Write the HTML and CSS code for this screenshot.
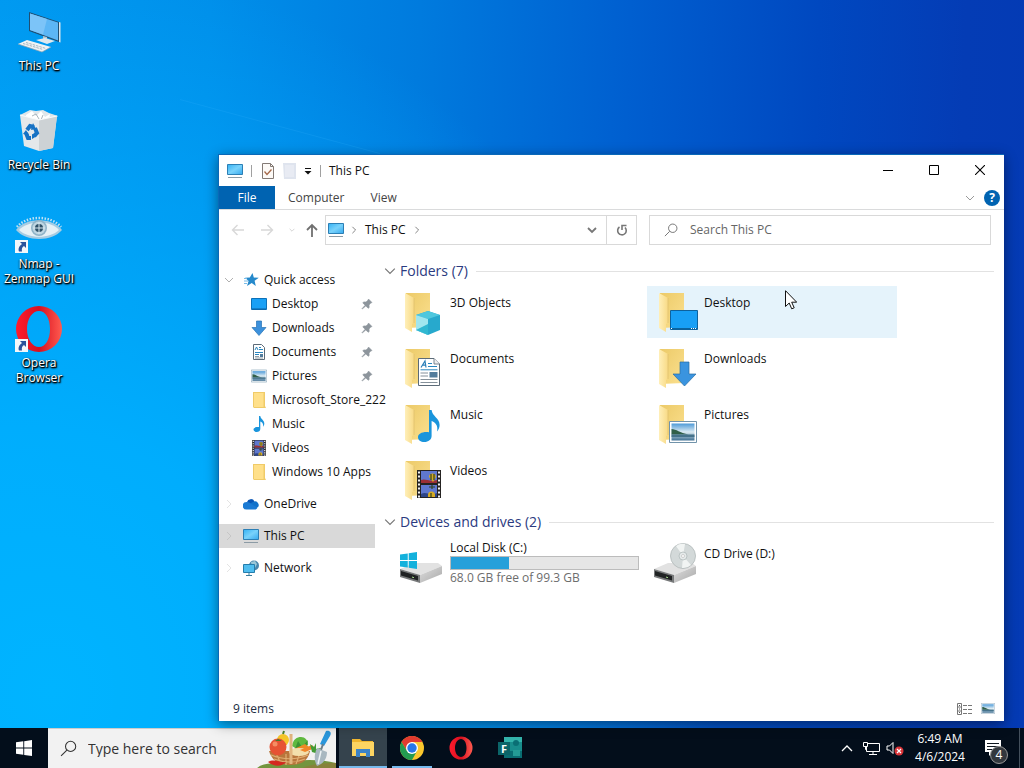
FILE: index.html
```html
<!DOCTYPE html>
<html lang="en">
<head>
  <meta charset="UTF-8">
  <title>This PC</title>
  <link rel="stylesheet" href="styles.css">
</head>
<body>

<!-- shared icons -->
<svg class="defs" width="0" height="0" aria-hidden="true">
  <defs>
    <linearGradient id="g-screen" x1="0" y1="0" x2="1" y2="1">
      <stop offset="0" stop-color="#35b2f4"/><stop offset=".5" stop-color="#79d2fb"/><stop offset="1" stop-color="#35a9ee"/>
    </linearGradient>
    <linearGradient id="g-back" x1="0" y1="0" x2="1" y2="1">
      <stop offset="0" stop-color="#ecca68"/><stop offset="1" stop-color="#fbe08f"/>
    </linearGradient>
    <linearGradient id="g-front" x1="0" y1="0" x2="1" y2="0">
      <stop offset="0" stop-color="#ffefb9"/><stop offset="1" stop-color="#f8da85"/>
    </linearGradient>
    <linearGradient id="g-drive" x1="0" y1="0" x2="1" y2="1">
      <stop offset="0" stop-color="#dedede"/><stop offset="1" stop-color="#a9a9a9"/>
    </linearGradient>
    <linearGradient id="g-opera" x1="0" y1="0" x2="1" y2="0">
      <stop offset="0" stop-color="#ff1b2d"/><stop offset=".5" stop-color="#d9101f"/><stop offset="1" stop-color="#ff5b50"/>
    </linearGradient>
    <linearGradient id="g-photo" x1="0" y1="0" x2="0" y2="1">
      <stop offset="0" stop-color="#4d9ad8"/><stop offset=".5" stop-color="#dcebf2"/><stop offset="1" stop-color="#3e6f92"/>
    </linearGradient>
    <symbol id="i-pc" viewBox="0 0 16 16">
      <path d="M.5 1.500h15v10H.500z" fill="url(#g-screen)" stroke="#2c7fb5"/>
      <path d="M1 14.500h14" stroke="#8c9ba5"/>
    </symbol>
    <symbol id="i-folder" viewBox="0 0 48 48">
      <path d="M7 5h24v34l-24 1z" fill="url(#g-back)"/>
      <path d="M6 5l9 5v25l-2 1v8l-7-4z" fill="url(#g-front)"/>
      <path d="M15 10v25" stroke="#dfc070" stroke-width=".8"/>
    </symbol>
    <symbol id="i-smallfolder" viewBox="0 0 16 16">
      <path d="M2 0h12v14l1 2H3l-1-1z" fill="#f0cb68"/><path d="M3 1h9.500v14H3z" fill="#ffe08a"/>
    </symbol>
    <symbol id="i-down" viewBox="0 0 16 16">
      <path d="M5.500 1h5v6.500H15L8 15.500 1 7.500h4.500z" fill="#3c91dc" stroke="#2672b4" stroke-width=".7"/>
    </symbol>
    <symbol id="i-note" viewBox="0 0 16 16">
      <path d="M8 0h1.300c.2 3 4 4 4 7.500 0 1.500-.6 2.500-1.300 3.300.8-3-1-4.800-2.700-5.300V13c0 1.800-1.600 3-3.600 3C3.800 16 2.500 15 2.500 13.600c0-1.700 2.200-2.900 5.500-2.500z" fill="#1a95dc"/>
    </symbol>
    <symbol id="i-doc" viewBox="0 0 22 28">
      <path d="M.5.500h15.500l5.500 5.500v21.500H.500z" fill="#fff" stroke="#5c6b78"/>
      <path d="M16 .500V6h5.500" fill="#eee" stroke="#5c6b78" stroke-width=".8"/>
      <path d="M3 9.500L7 3l1 6.500M4.500 7.200h3.500" fill="none" stroke="#2a7fb8" stroke-width="1.200"/>
      <path d="M10 5.500h4M10 8.500h9M2.500 11.800h17" stroke="#2b86be"/>
      <path d="M2.500 15h7.500M2.500 18h7.500M2.500 21.500h17M2.500 24.500h17" stroke="#77858f" stroke-width=".9"/>
      <path d="M11.500 14h8v5.500h-8z" fill="#527c9c"/>
    </symbol>
    <symbol id="i-smalldoc" viewBox="0 0 16 16">
      <path d="M2.500.500h8l3 3v12h-11z" fill="#fff" stroke="#5c6b78"/>
      <path d="M4 6l1.500-3L7 6M8 3.500h2M8 5.500h4M4 8.500h8M4 10.500h4" fill="none" stroke="#2b86be"/>
      <path d="M4 12.500h4M4 14h8" stroke="#77858f" stroke-width=".8"/><path d="M9 10h3v3H9z" fill="#527c9c"/>
    </symbol>
    <symbol id="i-photo" viewBox="0 0 28 22">
      <path d="M.5.500h27v21H.500z" fill="#fff" stroke="#7193aa"/>
      <path d="M2.500 2.500h23v17h-23z" fill="url(#g-photo)"/>
      <path d="M2.500 8c5 0 8 4 17 5.500H2.500z" fill="#315f49"/><path d="M2.500 13.500h23V16h-23z" fill="#45728a"/>
    </symbol>
    <symbol id="i-film" viewBox="0 0 24 28">
      <path d="M0 0h24v28H0z" fill="#252322"/>
      <path d="M4 1h16v12H4zM4 15h16v12H4z" fill="#5f78cf"/>
      <path d="M4 10c4-2 8 2 16 0v3H4z" fill="#9b2f35"/><path d="M4 24c5-3 9 2 16-1v4H4z" fill="#2d4586"/>
      <path d="M12 7a3.500 3.500 0 1 1 7 0l-3 5zM11 25a3 3 0 1 1 7 0v2h-7z" fill="#d6ab24"/>
      <path d="M14 4v6M17 4v6M12 17h6M15 15v4M14 23v4" stroke="#31431f" stroke-width="1.200"/>
      <path d="M2 1.500v26M22 1.500v26" stroke="#f2f2f2" stroke-width="2" stroke-dasharray="2 2"/>
    </symbol>
    <symbol id="i-pin" viewBox="0 0 12 12">
      <path d="M7.500 1L11 4.500l-1.200.5L8 7l.2 2.500-1 .8L4.800 7.900 1.300 11 1 10.700l3.100-3.500L1.800 4.900l.8-1L5 4l2-1.800z" fill="#8d959c" stroke="#8d959c" stroke-width=".6"/>
    </symbol>
    <symbol id="i-chev" viewBox="0 0 10 10"><path d="M1 3l4 4 4-4" fill="none" stroke="currentColor"/></symbol>
    <symbol id="i-right" viewBox="0 0 10 10"><path d="M3 1l4 4-4 4" fill="none" stroke="currentColor"/></symbol>
    <symbol id="i-search" viewBox="0 0 16 16"><g fill="none" stroke="currentColor"><circle cx="10" cy="6" r="4.800"/><path d="M6.500 9.500L1 15"/></g></symbol>
    <symbol id="i-opera" viewBox="0 0 48 48">
      <path fill-rule="evenodd" d="M24 1a23 23 0 1 0 0 46 23 23 0 0 0 0-46zm0 5c6.500 0 11 7.500 11 18s-4.500 18-11 18-12-7.500-12-18S17.500 6 24 6z" fill="url(#g-opera)"/>
    </symbol>
    <symbol id="i-shortcut" viewBox="0 0 13 13">
      <path d="M0 0h13v13H0z" fill="#f4f7fa"/><path d="M5 2h6v6L9 6C7 7 6.500 9 7 11.500H4C2.800 8.500 4.500 5.500 7 4z" fill="#2b539c"/>
    </symbol>
    <symbol id="i-drive" viewBox="0 0 44 22">
      <path d="M1 8L15 2h24l4 3-22 9z" fill="#e2e2e2"/>
      <path d="M1 8l20 6v8L1 16z" fill="#77797a"/><path d="M21 14l22-9v8l-22 9z" fill="url(#g-drive)"/>
      <path d="M2 10l17 5v4.500L2 14.500z" fill="#202223"/><path d="M13 16l2 .7" stroke="#a6dc8c"/>
    </symbol>
    <symbol id="i-win" viewBox="0 0 16 16"><path d="M0 2.300L7.300 1.300v6.300H0zM8.200 1.200L16 0v7.600H8.200zM0 8.400h7.300v6.300L0 13.700zM8.200 8.400H16V16l-7.800-1.100z" fill="currentColor"/></symbol>
  </defs>
</svg>

<main class="desktop">
  <svg class="light" viewBox="0 0 1024 768" preserveAspectRatio="none" aria-hidden="true">
    <path d="M180 105L380 162" stroke="#35b4ff" stroke-width="1" opacity=".2"/>
  </svg>

  <div class="shortcuts">
    <a class="shortcut" href="#">
      <svg viewBox="0 0 48 48">
        <path d="M14 4l30 10v20L14 23z" fill="#1f4f73"/><path d="M15 5.500l28 9v18L15 22z" fill="#5cb6f5"/>
        <path d="M15 5.500l17 5.500-4 15.500-13-4.500z" fill="#7cc4f8"/><path d="M44 14l1.500.5v20L44 34z" fill="#d9e6ec"/>
        <path d="M28 28l4 1v4l-4-1z" fill="#b3c7d1"/><path d="M21 32l9-2 10 3-8 3z" fill="#dfe8ed"/>
        <path d="M3 36l9-4 24 7-9 5z" fill="#eef2f4"/><path d="M8 35.500l20 6M11 34.500l20 6" stroke="#93a7b4" stroke-width=".8" stroke-dasharray="2.500 1"/>
        <path d="M3 36l24 8 9-5" fill="none" stroke="#8ba2b0" stroke-width=".7"/>
      </svg>
      <span>This PC</span>
    </a>
    <a class="shortcut" href="#">
      <svg viewBox="0 0 48 48">
        <path d="M5 8l10-5 6 1 7-1 6 3 9 3-7 6-22 1z" fill="#dfe6ea"/>
        <path d="M11 8l6-4 4 5 5-5 4 6 5-3-1 7-12 1-11-3z" fill="#fff"/>
        <path d="M17 9l4-2 3 5M28 8l-2 5 6-1" fill="none" stroke="#a9b5bc"/>
        <path d="M5 8l19 5 18-4-4 32-14 3-15-5z" fill="#e4e8ea"/><path d="M24 13l18-4-4 32-14 3z" fill="#cdd2d5"/>
        <path d="M5 8l19 5 18-4" fill="none" stroke="#f8fafb" stroke-width="1.200"/>
        <g fill="none" stroke="#1672c4" stroke-width="4"><path d="M12 23l3-4 4 1"/><path d="M20 21l2 5-3 3"/><path d="M16 31h-3l-2-5"/></g>
        <path d="M18 16l3 6-5 1zM22 29l-5 3v-5zM8 27l3-4 3 5z" fill="#1672c4"/>
      </svg>
      <span>Recycle Bin</span>
    </a>
    <a class="shortcut" href="#">
      <svg viewBox="0 0 48 48">
        <path d="M2 21C12 9 36 9 46 21" fill="none" stroke="#bde0f3" stroke-width="2.500" stroke-dasharray="1.500 1.500"/>
        <path d="M1 24c9-13 37-13 46 0-10 12-36 12-46 0z" fill="#a6cce2"/><path d="M4 24c9-10 32-10 40 0-9 9-31 9-40 0z" fill="#e6f1f6"/>
        <circle cx="24" cy="22" r="8" fill="#8fb3c7"/><circle cx="24" cy="22" r="6.500" fill="#bfd6e2"/><circle cx="24" cy="22" r="4" fill="#2e5067"/>
        <path d="M24 16v12M18 22h12" stroke="#d5e6ef"/>
        <use href="#i-shortcut" x="0" y="34" width="13" height="13"/>
      </svg>
      <span>Nmap - Zenmap GUI</span>
    </a>
    <a class="shortcut" href="#">
      <svg viewBox="0 0 48 48">
        <use href="#i-opera" width="48" height="48"/>
        <use href="#i-shortcut" x="0" y="34" width="13" height="13"/>
      </svg>
      <span>Opera Browser</span>
    </a>
  </div>

  <section class="window">
    <header class="titlebar">
      <svg class="ic16" viewBox="0 0 16 16"><use href="#i-pc"/></svg>
      <i class="sep"></i>
      <button class="quick" aria-label="Properties">
        <svg class="ic16" viewBox="0 0 16 16"><path d="M2.500.500h8l3 3v12h-11z" fill="#fdfaf7" stroke="#837a75"/><path d="M10.500.500v3h3" fill="none" stroke="#837a75"/><path d="M4.500 8.500l2.500 3 4.500-5" fill="none" stroke="#a5694a" stroke-width="1.300"/></svg>
      </button>
      <button class="quick" aria-label="New folder">
        <svg class="ic16" viewBox="0 0 16 16"><path d="M1 0h13v16H2z" fill="#dfe4ee"/><path d="M3 2h9v12H3z" fill="#e8ebf3"/></svg>
      </button>
      <button class="quick small" aria-label="Customize toolbar">
        <svg width="8" height="8" viewBox="0 0 8 8"><path d="M1 1.500h6" stroke="#111"/><path d="M.5 4h7L4 7.500z" fill="#111"/></svg>
      </button>
      <i class="sep"></i>
      <span>This PC</span>
      <div class="controls">
        <button aria-label="Minimize"><svg width="10" height="10"><path d="M0 5.500h10" stroke="#000"/></svg></button>
        <button aria-label="Maximize"><svg width="10" height="10"><path d="M.5.500h9v9h-9z" fill="none" stroke="#000"/></svg></button>
        <button aria-label="Close"><svg width="10" height="10"><path d="M0 0l10 10M10 0L0 10" stroke="#000" stroke-width="1.100"/></svg></button>
      </div>
    </header>

    <nav class="tabs">
      <button class="tab file">File</button>
      <button class="tab">Computer</button>
      <button class="tab">View</button>
      <div class="help">
        <button aria-label="Expand ribbon"><svg width="10" height="10"><use href="#i-chev"/></svg></button>
        <button class="question" aria-label="Help">?</button>
      </div>
    </nav>

    <div class="toolbar">
      <div class="arrows">
        <button aria-label="Back"><svg width="14" height="12"><path d="M13 6H2M6.500 1L1.500 6l5 5" fill="none" stroke="#d8d8d8" stroke-width="1.400"/></svg></button>
        <button aria-label="Forward"><svg width="14" height="12"><path d="M1 6h11M7.500 1l5 5-5 5" fill="none" stroke="#d8d8d8" stroke-width="1.400"/></svg></button>
        <button class="recent" aria-label="Recent locations"><svg width="6" height="6" viewBox="0 0 10 10"><use href="#i-chev"/></svg></button>
        <button aria-label="Up"><svg width="12" height="14"><path d="M6 14V2M1 7l5-5 5 5" fill="none" stroke="#707070" stroke-width="1.800"/></svg></button>
      </div>
      <div class="address">
        <svg class="ic16" viewBox="0 0 16 16"><use href="#i-pc"/></svg>
        <svg class="step" width="8" height="8"><use href="#i-right"/></svg>
        <button class="crumb">This PC</button>
        <svg class="step" width="8" height="8"><use href="#i-right"/></svg>
        <button class="history" aria-label="Previous locations"><svg width="10" height="10"><path d="M1 3l4 4 4-4" fill="none" stroke="#777" stroke-width="1.800"/></svg></button>
        <button class="refresh" aria-label="Refresh"><svg width="12" height="12"><path d="M8.500 3a4.300 4.300 0 1 1-5.500.500M1.500 1.500h4.500v4.500" fill="none" stroke="#777" stroke-width="1.600"/></svg></button>
      </div>
      <label class="find">
        <svg width="14" height="14"><use href="#i-search"/></svg>
        <input type="text" placeholder="Search This PC" aria-label="Search This PC">
      </label>
    </div>

    <div class="content">
      <nav class="tree">
        <a class="node" href="#"><svg class="twist open"><use href="#i-chev"/></svg>
          <svg class="ic16" viewBox="0 0 16 16"><path d="M9.500 1l1.300 4.500 5 .3-4.200 3 1.200 5.200L8.700 11 4 14l1.600-5L2 5.800l4.800-.3z" fill="#2589cb"/><path d="M1 9h4M1 11.500h3M1 6.500h3" stroke="#79bce8"/></svg>Quick access</a>
        <a class="node sub" href="#"><svg class="ic16" viewBox="0 0 16 16"><path d="M.5 2.500h15v11H.500z" fill="#19a0f5" stroke="#0c71b8"/><path d="M1 13h14" stroke="#0a5f9e"/></svg><span>Desktop</span><svg class="pin"><use href="#i-pin"/></svg></a>
        <a class="node sub" href="#"><svg class="ic16"><use href="#i-down"/></svg><span>Downloads</span><svg class="pin"><use href="#i-pin"/></svg></a>
        <a class="node sub" href="#"><svg class="ic16"><use href="#i-smalldoc"/></svg><span>Documents</span><svg class="pin"><use href="#i-pin"/></svg></a>
        <a class="node sub" href="#"><svg class="ic16"><use href="#i-photo"/></svg><span>Pictures</span><svg class="pin"><use href="#i-pin"/></svg></a>
        <a class="node sub" href="#"><svg class="ic16"><use href="#i-smallfolder"/></svg><span>Microsoft_Store_222</span></a>
        <a class="node sub" href="#"><svg class="ic16"><use href="#i-note"/></svg><span>Music</span></a>
        <a class="node sub" href="#"><svg class="ic16"><use href="#i-film"/></svg><span>Videos</span></a>
        <a class="node sub" href="#"><svg class="ic16"><use href="#i-smallfolder"/></svg><span>Windows 10 Apps</span></a>
        <a class="node root" href="#"><svg class="twist"><use href="#i-right"/></svg>
          <svg class="ic16" viewBox="0 0 16 16"><path d="M4 6a4 4 0 0 1 7.500-.5L7 11z" fill="#0a56b5"/><path d="M11 5.500a3.800 3.800 0 0 1 4.500 5L12 13 6 8z" fill="#1272c9"/><path d="M3.500 13.500a3.500 3.500 0 0 1 0-7.500c2-.2 3 .7 4.500 1.800l6.500 3.700c-.5 1.300-1.300 2-2.500 2z" fill="#1b7ad3"/></svg>OneDrive</a>
        <a class="node root selected" href="#"><svg class="twist"><use href="#i-right"/></svg><svg class="ic16"><use href="#i-pc"/></svg>This PC</a>
        <a class="node root" href="#"><svg class="twist"><use href="#i-right"/></svg>
          <svg class="ic16" viewBox="0 0 16 16"><circle cx="11" cy="5.500" r="5" fill="#4a86ad"/><path d="M8 2l4-1 2 3-2 4-3-1z" fill="#9bc7d8"/><path d="M.5 4.500h11v8H.500z" fill="#50bdef" stroke="#257dac"/><path d="M6 13v2M3 15.500h6" stroke="#397c9c"/></svg>Network</a>
      </nav>

      <div class="files">
        <h2 class="group"><svg><use href="#i-chev"/></svg>Folders (7)</h2>
        <div class="tiles">
          <a class="tile" href="#">
            <svg viewBox="0 0 48 48"><use href="#i-folder"/><path d="M17 27l12-4 12 4v15l-12 5-12-5z" fill="#27a9cd"/><path d="M17 27l12-4 12 4-12 4z" fill="#4ec7de"/><path d="M17 27l12 4v16l-12-5z" fill="#a1e6ee"/><path d="M17 42l12-6v11z" fill="#31b8d1"/></svg>
            <span>3D Objects</span></a>
          <a class="tile hover" href="#">
            <svg viewBox="0 0 48 48"><use href="#i-folder"/><path d="M17.500 22.500h27v19h-27z" fill="#189ff5" stroke="#0d619c"/><path d="M18 40.500h26" stroke="#0b649f"/><path d="M18 40.500h1M38 40.500h5" stroke="#fff" stroke-dasharray="1 1"/></svg>
            <span>Desktop</span></a>
          <a class="tile" href="#">
            <svg viewBox="0 0 48 48"><use href="#i-folder"/><use href="#i-doc" x="19" y="14" width="22" height="28"/></svg>
            <span>Documents</span></a>
          <a class="tile" href="#">
            <svg viewBox="0 0 48 48"><use href="#i-folder"/><path d="M27 18h9v12h7L31.500 42 20 30h7z" fill="#3a94df" stroke="#286da5" stroke-width=".7"/></svg>
            <span>Downloads</span></a>
          <a class="tile" href="#">
            <svg viewBox="0 0 48 48"><use href="#i-folder"/><use href="#i-note" x="14" y="10" width="32" height="32"/></svg>
            <span>Music</span></a>
          <a class="tile" href="#">
            <svg viewBox="0 0 48 48"><use href="#i-folder"/><use href="#i-photo" x="16" y="21" width="28" height="22"/></svg>
            <span>Pictures</span></a>
          <a class="tile" href="#">
            <svg viewBox="0 0 48 48"><use href="#i-folder"/><use href="#i-film" x="18" y="14" width="24" height="28"/></svg>
            <span>Videos</span></a>
        </div>

        <h2 class="group drives"><svg><use href="#i-chev"/></svg>Devices and drives (2)</h2>
        <div class="tiles">
          <a class="tile" href="#">
            <svg viewBox="0 0 48 48"><use href="#i-drive" x="0" y="22" width="44" height="22"/><g color="#13b1dc"><use href="#i-win" x="1" y="13" width="17" height="17"/></g></svg>
            <div class="disk">
              <span>Local Disk (C:)</span>
              <div class="bar"><div style="width: 31%"></div></div>
              <span class="free">68.0 GB free of 99.3 GB</span>
            </div></a>
          <a class="tile" href="#">
            <svg viewBox="0 0 48 48"><use href="#i-drive" x="0" y="22" width="44" height="22"/><circle cx="30" cy="17" r="12.500" fill="#d3d9d9" stroke="#b1b9b9" stroke-width=".8"/><path d="M30 17l-7-10a12 12 0 0 1 9-2zM30 17l8 9a12 12 0 0 1-9 3z" fill="#f1f4f3"/><circle cx="30" cy="17" r="4" fill="#e5eaea" stroke="#aab4b4" stroke-width=".7"/><circle cx="30" cy="17" r="1.500" fill="#fff" stroke="#aaa" stroke-width=".5"/></svg>
            <span>CD Drive (D:)</span></a>
        </div>
      </div>
    </div>

    <footer class="status">
      <span>9 items</span>
      <button aria-label="Details"><svg width="16" height="12"><path d="M.5.500h4v11h-4zM.5 4h4M.5 8h4" fill="none" stroke="#777"/><path d="M2 2.500h1M2 6h1M2 9.500h1" stroke="#555"/><path d="M6 2.500h10M6 6.500h10M6 10.500h10" stroke="#777" stroke-dasharray="4 1"/></svg></button>
      <button aria-label="Large icons"><svg width="14" height="11"><use href="#i-photo"/></svg></button>
    </footer>
  </section>

  <svg class="cursor" width="12" height="20" viewBox="0 0 12 20"><path d="M.5.700v15.800l3.700-3.500 2.500 5.800 2.500-1-2.500-5.600h5z" fill="#fff" stroke="#111"/></svg>
</main>

<footer class="taskbar">
  <button class="start" aria-label="Start"><svg width="16" height="16"><use href="#i-win"/></svg></button>
  <label class="search">
    <svg width="17" height="17"><use href="#i-search"/></svg>
    <input type="text" placeholder="Type here to search" aria-label="Type here to search">
    <svg class="basket" width="80" height="40" viewBox="0 0 80 40">
      <path d="M0 40c6-6 14-6 24-5 16-5 40-5 56-1v6z" fill="#73953e"/><path d="M45 40c8-5 24-6 35-6v6z" fill="#87823a"/>
      <path d="M13 22c3 10 10 14 21 14s18-4 20-14z" fill="#b8763c"/><path d="M15 26c12 5 26 5 37 0M18 30c10 4 22 4 31 0M20 24l5 11M30 25v11M44 24l-4 11" stroke="#e0ad72" stroke-width="1.200" fill="none"/>
      <circle cx="27" cy="11" r="6" fill="#f5c629"/><path d="M27 5l1-3" stroke="#4c842c" stroke-width="2"/>
      <circle cx="22" cy="18" r="8.500" fill="#e65334"/><circle cx="19" cy="15" r="2.500" fill="#f58d63"/><path d="M22 10l-3 2h7z" fill="#3f7b2d"/>
      <path d="M36 17c1-7 5-9 9-9s7 3 7 8l-8 6z" fill="#60b940"/><path d="M39 20l3-8 4 6 6-7-2 10z" fill="#3c9434"/>
      <path d="M38 20l11-5 4 3-9 9z" fill="#ef8a24"/><ellipse cx="43" cy="23" rx="10" ry="4" fill="#f3dfac"/>
      <path d="M44 21l12-5 3 3-10 4z" fill="#f0862a"/>
      <path d="M54 15l4 3 2-4v6l5-1-2 4 3 3-10-3z" fill="#439b35"/>
      <path d="M35 35V5" stroke="#e2b57f" stroke-width="3"/>
      <path d="M12 33c6-4 12 1 18 0-4 5-12 5-18 0z" fill="#d42920"/>
      <path d="M70 2c4-1 6 2 4 5l-6 10-4-2z" fill="#2a96db"/><path d="M67 15l-2 6" stroke="#6c7d89" stroke-width="2"/><path d="M61 19l10 4c0 7-4 12-10 14-3-5-3-12 0-18z" fill="#a9b8c1"/><path d="M65 22l-3 13" stroke="#eef3f5" stroke-width="1.500"/>
    </svg>
  </label>
  <div class="apps">
    <button class="app active" aria-label="File Explorer"><svg width="24" height="24" viewBox="0 0 24 24"><path d="M1 3h8l2 2h11v15H1z" fill="#f0b62f"/><path d="M1 6h22v14H1z" fill="#fcd462"/><path d="M5 21v-8h14v8h-4v-4H9v4z" fill="#3c83c8"/></svg></button>
    <button class="app running" aria-label="Chrome"><svg width="24" height="24" viewBox="0 0 24 24"><circle cx="12" cy="12" r="12" fill="#fbc72d"/><path d="M1.600 6A12 12 0 0 1 22.400 6H12L7 15z" fill="#e23b30"/><path d="M1.600 6A12 12 0 0 0 12 24l5-9H7z" fill="#239b50"/><circle cx="12" cy="12" r="6" fill="#fff"/><circle cx="12" cy="12" r="4.700" fill="#2877e8"/></svg></button>
    <button class="app" aria-label="Opera"><svg width="24" height="24"><use href="#i-opera"/></svg></button>
    <button class="app" aria-label="Forms"><svg width="24" height="24" viewBox="0 0 24 24"><path d="M6 1h18v21H6z" fill="#188d8c"/><path d="M6 1h18v5H6z" fill="#34b4ac"/><path d="M6 15h18v7H6z" fill="#096d72"/><circle cx="18" cy="7" r="3" fill="#0a6f74"/><path d="M15 14h7v6h-7z" fill="#249c96"/><path d="M0 6h12v13H0z" fill="#0b6569"/><text class="letter" x="3" y="17">F</text></svg></button>
  </div>
  <div class="tray">
    <button aria-label="Show hidden icons"><svg width="12" height="8"><path d="M1 7l5-5 5 5" fill="none" stroke="#fff" stroke-width="1.300"/></svg></button>
    <button aria-label="Network"><svg width="17" height="15"><path d="M5 2.500h11.500v8H3.500V6M10 10.500v3M6 13.500h8M.5 1.500h4v4h-4zM2.500 5.500v3h1" fill="none" stroke="#fff"/></svg></button>
    <button aria-label="Volume muted"><svg width="18" height="15"><path d="M1 5h2.500L7 1.500v11L3.500 9H1z" fill="none" stroke="#fff"/><circle cx="13" cy="10" r="4.500" fill="#d93438"/><path d="M11 8l4 4M15 8l-4 4" stroke="#fff" stroke-width="1.200"/></svg></button>
    <div class="clock"><span>6:49 AM</span><span>4/6/2024</span></div>
    <button class="notes" aria-label="4 new notifications"><svg width="16" height="16"><path d="M0 0h16v12h-8l-4 4v-4H0z" fill="#fff"/><path d="M2 3.500h12M2 6.500h12M2 9.500h8" stroke="#101820"/></svg><span class="badge">4</span></button>
    <i class="peek"></i>
  </div>
</footer>

</body>
</html>
```
FILE: styles.css
```css
* {
  box-sizing: border-box;
}

body {
  margin: 0;
  height: 100vh;
  display: flex;
  flex-direction: column;
  overflow: hidden;
  font: 12px/16px "Open Sans", "Noto Sans", sans-serif;
  color: #111;
  background:
    radial-gradient(ellipse 65% 95% at 5% 90%, #00b4ff 0%, rgba(0, 176, 255, .9) 35%, rgba(0, 165, 250, 0) 100%),
    linear-gradient(92deg, #0098f0 0%, #008fea 20%, #007bde 40%, #005fd0 60%, #0048c0 78%, #043cb5 92%, #043ab4 100%);
}

button,
input {
  margin: 0;
  padding: 0;
  border: 0;
  background: none;
  font: inherit;
  color: inherit;
  outline: none;
}

a {
  color: inherit;
  text-decoration: none;
}

svg {
  display: block;
  flex: none;
}

.defs {
  position: absolute;
}

.ic16 {
  width: 16px;
  height: 16px;
}

/* desktop */
.desktop {
  flex: 1;
  min-height: 0;
  position: relative;
}

.light {
  position: absolute;
  width: 100%;
  height: 100%;
}

.shortcuts {
  position: relative;
  width: 78px;
}

.shortcut {
  display: flex;
  flex-direction: column;
  align-items: center;
  height: 99px;
  padding-top: 8px;
  line-height: 15px;
  text-align: center;
  color: #fff;
  text-shadow: 0 1px 2px #000, 1px 1px 2px #000, 1px 1px 1px #000;
}

.shortcut svg {
  width: 48px;
  height: 48px;
  margin-bottom: 2px;
}

/* explorer window */
.window {
  position: absolute;
  top: 154px;
  right: 20px;
  bottom: 7px;
  left: 218px;
  display: flex;
  flex-direction: column;
  background: #fff;
  border: 1px solid #0a68b8;
  border-right: 0;
  border-bottom: 0;
  box-shadow: 0 3px 12px rgba(0, 0, 0, .45);
}

.titlebar {
  display: flex;
  align-items: center;
  height: 31px;
  padding-left: 8px;
}

.sep {
  width: 1px;
  height: 12px;
  margin: 0 8px;
  background: #a0a0a0;
}

.quick {
  margin-right: 6px;
}

.quick.small {
  margin: 0;
}

.controls {
  display: flex;
  align-self: flex-start;
  margin-left: auto;
  padding-right: 1px;
}

.controls button {
  width: 46px;
  height: 30px;
  display: grid;
  place-items: center;
}

.tabs {
  display: flex;
  height: 24px;
  border-bottom: 1px solid #dadbdc;
  color: #444;
}

.tab {
  padding: 0 13px;
}

.tab.file {
  width: 56px;
  background: #0063b1;
  color: #fff;
}

.help {
  display: flex;
  align-items: center;
  gap: 9px;
  margin-left: auto;
  padding-right: 4px;
  color: #999;
}

.question {
  width: 16px;
  height: 16px;
  border-radius: 50%;
  background: #0063b1;
  color: #fff;
  font-weight: bold;
}

.toolbar {
  display: flex;
  align-items: center;
  height: 40px;
  padding-right: 13px;
  color: #666;
}

.arrows {
  display: flex;
  align-items: center;
  width: 106px;
  padding-left: 12px;
  gap: 15px;
}

.recent {
  color: #bbb;
}

.arrows .recent {
  margin-right: -4px;
}

.address {
  display: flex;
  align-items: center;
  flex: 1;
  height: 30px;
  padding-left: 2px;
  border: 1px solid #d9d9d9;
}

.step {
  margin: 0 6px;
}

.crumb {
  margin: 0 1px;
  color: #111;
}

.history {
  margin-left: auto;
  padding: 0 9px;
}

.refresh {
  display: grid;
  place-items: center;
  width: 30px;
  height: 28px;
  border-left: 1px solid #d9d9d9;
}

.refresh svg {
  transform: scaleX(-1);
}

.find {
  display: flex;
  align-items: center;
  gap: 12px;
  flex: 0 1 342px;
  height: 30px;
  margin-left: 12px;
  padding-left: 14px;
  border: 1px solid #d9d9d9;
}

.find input {
  width: 100%;
}

input::placeholder {
  color: inherit;
  opacity: 1;
}

.content {
  display: flex;
  flex: 1;
  min-height: 0;
}

/* navigation tree */
.tree {
  width: 165px;
  padding: 18px 9px 0 0;
}

.node {
  display: flex;
  align-items: center;
  gap: 5px;
  height: 24px;
  padding-left: 5px;
  white-space: nowrap;
}

.node.sub {
  padding-left: 32px;
}

.node.root {
  margin-top: 8px;
}

.twist {
  width: 10px;
  height: 10px;
  margin-right: 4px;
  color: #e4e4e4;
}

.twist.open {
  color: #b0b0b0;
}

.selected .twist {
  color: #c6c6c6;
}

.pin {
  width: 12px;
  height: 12px;
  margin-left: auto;
  margin-right: 2px;
}

.selected {
  background: #d9d9d9;
}

/* file list */
.files {
  flex: 1;
  padding: 11px 10px 0 0;
}

.group {
  display: flex;
  align-items: center;
  margin: 0;
  font-size: 14px;
  font-weight: normal;
  line-height: 20px;
  color: #2b3a80;
}

.group svg {
  width: 12px;
  height: 12px;
  margin-right: 4px;
  color: #777;
}

.group::after {
  content: "";
  flex: 1;
  height: 1px;
  margin-left: 8px;
  background: #e2e2e2;
}

.drives {
  margin-top: 6px;
}

.tiles {
  display: grid;
  grid-template-columns: repeat(auto-fill, 250px);
  gap: 4px;
  padding: 5px 0 0 9px;
}

.tile {
  display: flex;
  height: 52px;
  padding-left: 6px;
}

.tile > svg {
  width: 48px;
  height: 48px;
  margin: 2px 3px 0 0;
}

.tile > span {
  margin-top: 9px;
}

.hover {
  background: #e5f3fb;
}

.disk {
  display: flex;
  flex-direction: column;
  align-self: center;
  width: 189px;
}

.bar {
  height: 14px;
  border: 1px solid #bcbcbc;
  background: #e6e6e6;
}

.bar div {
  height: 100%;
  background: #26a0da;
}

.free {
  color: #6d6d6d;
}

.status {
  display: flex;
  align-items: center;
  gap: 8px;
  height: 25px;
  padding: 0 9px 0 14px;
  color: #1b2c42;
}

.status span {
  margin-right: auto;
}

.cursor {
  position: absolute;
  top: 290px;
  left: 785px;
}

/* taskbar */
.taskbar {
  display: flex;
  height: 40px;
  background: #030e1b;
  color: #fff;
}

.start {
  display: grid;
  place-items: center;
  width: 48px;
}

.search {
  display: flex;
  align-items: center;
  width: 288px;
  padding-left: 12px;
  background: #f2f2f2;
  border-top: 1px solid #ccc;
  color: #333;
  font-size: 14px;
}

.search input {
  flex: 1;
  min-width: 0;
  margin-left: 11px;
}

.apps {
  display: flex;
  gap: 1px;
  margin-left: 3px;
}

.app {
  display: grid;
  place-items: center;
  width: 48px;
}

.app.active {
  background: #35434d;
  box-shadow: inset 0 -2px #76b9ed;
}

.app.running {
  background: linear-gradient(#76b9ed, #76b9ed) center bottom / 40px 2px no-repeat;
}

.letter {
  font-size: 11px;
  font-weight: bold;
  fill: #fff;
}

.tray {
  display: flex;
  align-items: center;
  margin-left: auto;
}

.tray button {
  display: grid;
  place-items: center;
  width: 24px;
  height: 40px;
}

.clock {
  display: flex;
  flex-direction: column;
  width: 66px;
  text-align: center;
  line-height: 18px;
}

.tray .notes {
  position: relative;
  width: 40px;
}

.badge {
  position: absolute;
  top: 18px;
  right: 5px;
  width: 18px;
  height: 18px;
  border: 1px solid #999;
  border-radius: 50%;
  background: #33383e;
  line-height: 16px;
}

.peek {
  width: 5px;
  height: 40px;
  margin-left: 6px;
  border-left: 1px solid #44505c;
}
```
